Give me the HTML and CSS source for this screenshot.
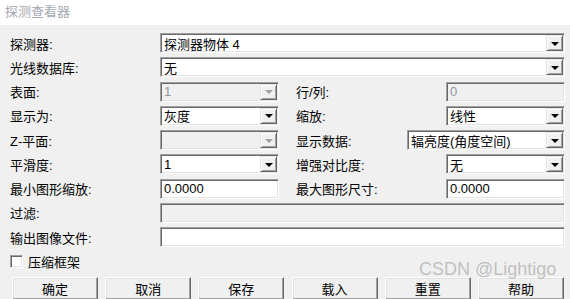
FILE: index.html
```html
<!DOCTYPE html>
<html>
<head>
    <title>探测查看器</title>
    <link rel="stylesheet" href="styles.css">
</head>
<body>
    <div class="window">
        <div class="titlebar">探测查看器</div>
        <div class="form">
            <div class="row">
                <label class="lbl">探测器:</label>
                <div class="combo wide"><span class="value">探测器物体 4</span><span class="arrow"></span></div>
            </div>
            <div class="row">
                <label class="lbl">光线数据库:</label>
                <div class="combo wide"><span class="value">无</span><span class="arrow"></span></div>
            </div>
            <div class="row">
                <label class="lbl">表面:</label>
                <div class="combo small disabled"><span class="value">1</span><span class="arrow"></span></div>
                <label class="lbl right">行/列:</label>
                <div class="field small disabled">0</div>
            </div>
            <div class="row">
                <label class="lbl">显示为:</label>
                <div class="combo small"><span class="value">灰度</span><span class="arrow"></span></div>
                <label class="lbl right">缩放:</label>
                <div class="combo small"><span class="value">线性</span><span class="arrow"></span></div>
            </div>
            <div class="row">
                <label class="lbl">Z-平面:</label>
                <div class="combo small disabled"><span class="value"></span><span class="arrow"></span></div>
                <label class="lbl right">显示数据:</label>
                <div class="combo medium"><span class="value">辐亮度(角度空间)</span><span class="arrow"></span></div>
            </div>
            <div class="row">
                <label class="lbl">平滑度:</label>
                <div class="combo small"><span class="value">1</span><span class="arrow"></span></div>
                <label class="lbl right">增强对比度:</label>
                <div class="combo small"><span class="value">无</span><span class="arrow"></span></div>
            </div>
            <div class="row">
                <label class="lbl">最小图形缩放:</label>
                <div class="field small">0.0000</div>
                <label class="lbl right">最大图形尺寸:</label>
                <div class="field small">0.0000</div>
            </div>
            <div class="row">
                <label class="lbl">过滤:</label>
                <div class="field wide disabled"></div>
            </div>
            <div class="row">
                <label class="lbl">输出图像文件:</label>
                <div class="field wide"></div>
            </div>
            <div class="row">
                <span class="checkbox"></span>
                <label class="check-label">压缩框架</label>
            </div>
            <div class="buttons">
                <button>确定</button>
                <button>取消</button>
                <button>保存</button>
                <button>载入</button>
                <button>重置</button>
                <button>帮助</button>
            </div>
        </div>
        <div class="watermark">CSDN @Lightigo</div>
    </div>
</body>
</html>
```

FILE: styles.css
```css
body {
    margin: 0;
    background: #f0f0f0;
    font-family: "Liberation Sans", "Noto Sans CJK SC", sans-serif;
    font-size: 13px;
    color: #000;
}

.window {
    position: relative;
    width: 570px;
    height: 299px;
    overflow: hidden;
}

.titlebar {
    height: 25px;
    line-height: 24px;
    background: #fff;
    color: #a3a8b0;
    padding-left: 5px;
}

.form {
    padding: 8px 5px 0 10px;
}

.row {
    display: flex;
    align-items: center;
    height: 20px;
    margin-bottom: 4.25px;
}

.lbl {
    width: 150px;
    flex-shrink: 0;
}

.lbl.right {
    width: auto;
    flex: 1;
    padding-left: 17px;
}

.combo,
.field {
    box-sizing: border-box;
    height: 20px;
    display: flex;
    align-items: center;
    background: #fff;
    border: 1px solid;
    border-color: #a0a0a0 #fff #fff #a0a0a0;
    padding: 1px;
    box-shadow: inset 1px 1px 0 #696969, inset -1px -1px 0 #e3e3e3;
}

.field {
    padding-left: 3px;
}

.wide {
    width: 405px;
}

.small {
    width: 119px;
}

.medium {
    width: 158px;
}

.value {
    flex: 1;
    padding-left: 2px;
    white-space: nowrap;
    overflow: hidden;
}

.disabled {
    background: #f0f0f0;
    color: #8d96a0;
}

.arrow {
    box-sizing: border-box;
    width: 17px;
    height: 16px;
    flex-shrink: 0;
    background: #f0f0f0;
    border: 1px solid;
    border-color: #e3e3e3 #696969 #696969 #e3e3e3;
    box-shadow: inset 1px 1px 0 #fff, inset -1px -1px 0 #a0a0a0;
    display: flex;
    align-items: center;
    justify-content: center;
}

.arrow::after {
    content: "";
    width: 0;
    height: 0;
    border-left: 4px solid transparent;
    border-right: 4px solid transparent;
    border-top: 4px solid #000;
    margin-top: 1px;
}

.disabled .arrow::after {
    border-top-color: #a0a0a0;
}

.checkbox {
    box-sizing: border-box;
    width: 13px;
    height: 13px;
    background: #fff;
    border: 1px solid;
    border-color: #a0a0a0 #fff #fff #a0a0a0;
    box-shadow: inset 1px 1px 0 #696969, inset -1px -1px 0 #e3e3e3;
}

.check-label {
    margin-left: 5px;
}

.buttons {
    display: flex;
    gap: 7.2px;
    margin-left: 2px;
    padding-top: 1.5px;
}

button {
    box-sizing: border-box;
    width: 86px;
    height: 23px;
    padding: 0;
    font-family: inherit;
    font-size: 13px;
    color: #000;
    background: #f0f0f0;
    border: 1px solid;
    border-color: #fff #696969 #696969 #fff;
    box-shadow: inset -1px -1px 0 #a0a0a0, inset 1px 1px 0 #e3e3e3;
}

.watermark {
    position: absolute;
    left: 419px;
    top: 259px;
    font-size: 18px;
    color: rgba(150, 150, 150, 0.55);
    white-space: nowrap;
}
```
